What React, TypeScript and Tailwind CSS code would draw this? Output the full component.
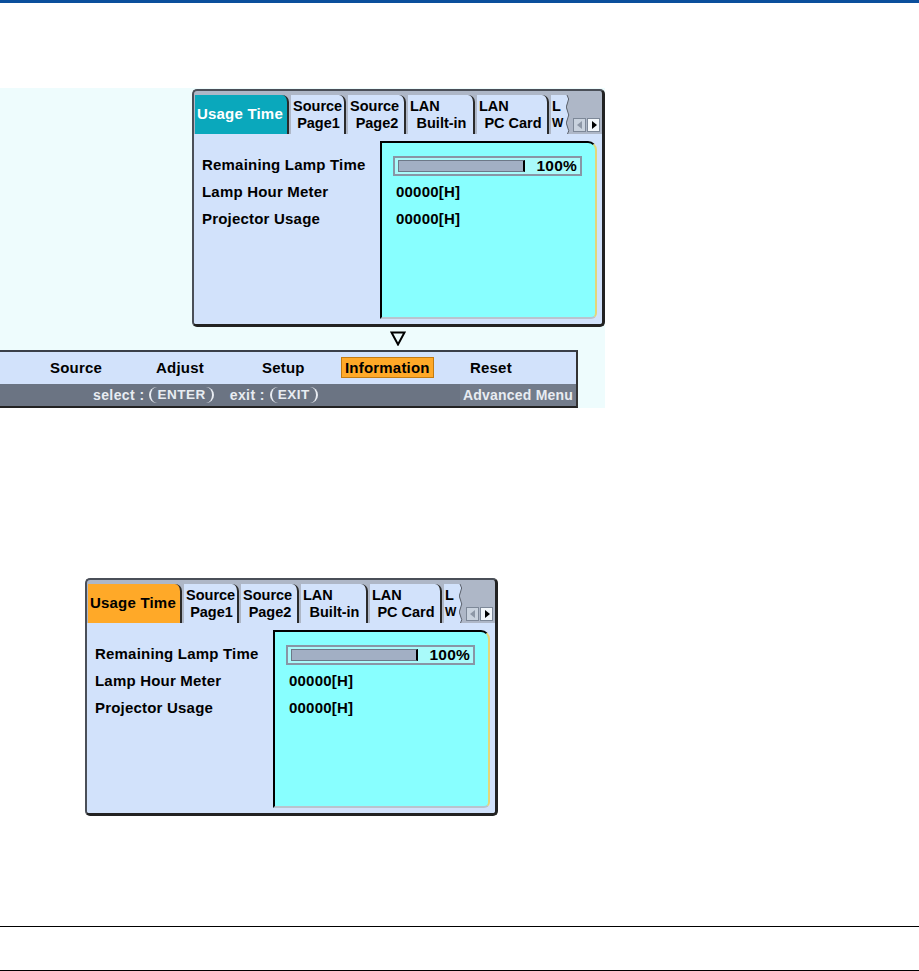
import React from "react";

const font = { fontFamily: '"Liberation Sans", Arial, sans-serif' };

function Tab({ top, bottom, w }: { top: string; bottom?: string; w: string }) {
  return (
    <div
      className={`${w} h-[39px] mr-[2px] bg-[#d2e2fb] border-r-2 border-[#2a2a2a] rounded-tr-[7px] flex flex-col justify-center leading-[17px] text-[14.5px] font-bold text-black pl-[2px]`}
    >
      <span>{top}</span>
      {bottom && <span className="text-center">{bottom}</span>}
    </div>
  );
}

function Arrow({ dir }: { dir: "l" | "r" }) {
  return (
    <div
      className={`w-[13px] h-[14px] flex items-center justify-center border border-[#7d8898] ${
        dir === "l" ? "bg-[#c9d2de]" : "bg-[#f2f6fa]"
      }`}
    >
      <svg width="8" height="10" viewBox="0 0 8 10">
        {dir === "l" ? (
          <polygon points="6,1 1,5 6,9" fill="#8d97a6" />
        ) : (
          <polygon points="2,1 7,5 2,9" fill="#000" />
        )}
      </svg>
    </div>
  );
}

function Panel({ active }: { active: "teal" | "orange" }) {
  const tabCls =
    active === "teal" ? "bg-[#0aa8bc] text-white" : "bg-[#ffa928] text-black";
  return (
    <div className="w-[413px] h-[238px] rounded-[5px] border-2 border-[#4a4f58] border-r-[3px] border-b-[3px] border-r-[#222] border-b-[#222] bg-[#aeb7c7] flex flex-col overflow-hidden">
      {/* tab strip */}
      <div className="flex items-end h-[43px] pl-[1px] pt-[3px]">
        <div
          className={`w-[94px] h-[39px] mr-[2px] ${tabCls} border-r-2 border-[#2a2a2a] rounded-tr-[7px] flex items-center pl-[2px] text-[15px] font-bold tracking-[0.2px]`}
        >
          Usage Time
        </div>
        <Tab top="Source" bottom="Page1" w="w-[55px]" />
        <Tab top="Source" bottom="Page2" w="w-[58px]" />
        <Tab top="LAN" bottom="Built-in" w="w-[67px]" />
        <Tab top="LAN" bottom="PC Card" w="w-[72px]" />
        <div className="flex h-[39px]">
          <div className="w-[15px] h-full bg-[#d2e2fb] flex flex-col justify-center leading-[17px] text-[14.5px] font-bold pl-[1px]">
            <span>L</span>
            <span className="text-[12px]">W</span>
          </div>
          <svg width="5" height="39" viewBox="0 0 5 39">
            <path
              d="M0 0 L1 0 Q4 4 1.5 8 Q-1 12 1.5 16 Q4 20 1.5 24 Q-1 28 1.5 32 Q4 36 1.5 39 L0 39 Z"
              fill="#d2e2fb"
            />
            <path
              d="M1 0 Q4 4 1.5 8 Q-1 12 1.5 16 Q4 20 1.5 24 Q-1 28 1.5 32 Q4 36 1.5 39"
              stroke="#5a606a"
              strokeWidth="1"
              fill="none"
            />
          </svg>
        </div>
        <div className="flex items-center h-[39px] pt-[20px] pl-[2px] gap-[1px]">
          <Arrow dir="l" />
          <Arrow dir="r" />
        </div>
      </div>
      {/* body */}
      <div className="flex flex-1 bg-[#d2e2fb] pl-[8px] pt-[7px] pr-[5px] pb-[5px]">
        <div className="w-[178px] pt-[11px] text-[15px] font-bold text-black tracking-[0.2px]">
          <div className="h-[27px] flex items-center">Remaining Lamp Time</div>
          <div className="h-[27px] flex items-center">Lamp Hour Meter</div>
          <div className="h-[27px] flex items-center">Projector Usage</div>
        </div>
        <div className="flex-1 bg-[#88ffff] border-l-2 border-t-2 border-black border-r-2 border-r-[#e3d77a] border-b-2 border-b-[#b9c4cf] rounded-tr-[9px] rounded-br-[6px] pt-[9px] pl-[11px] text-[15px] font-bold text-black tracking-[0.2px]">
          <div className="h-[27px] flex items-center">
            <div className="w-[189px] h-[20px] border-2 border-[#8896a6] bg-[#a9fafa] flex items-center pl-[3px] pr-[3px]">
              <div className="w-[127px] h-[12px] bg-[#a2afc4] border border-[#6d7888] border-r-2 border-r-black" />
              <span className="ml-auto text-[15.5px]">100%</span>
            </div>
          </div>
          <div className="h-[27px] flex items-center pl-[3px]">00000[H]</div>
          <div className="h-[27px] flex items-center pl-[3px]">00000[H]</div>
        </div>
      </div>
    </div>
  );
}

function Pill({ children }: { children: React.ReactNode }) {
  return (
    <span className="inline-flex items-center h-[16px] px-[6px] rounded-[8px] border-x-2 border-[#e8ecf2] text-[13.5px] leading-none tracking-[0.5px]">
      {children}
    </span>
  );
}

function MenuBar() {
  return (
    <div className="w-[578px] border-t-2 border-[#3a3f48] border-r-2 border-r-[#333] border-b-2 border-b-[#222]">
      <div className="h-[32px] bg-[#d2e2fb] flex items-center text-[15px] font-bold text-black tracking-[0.2px]">
        <span className="w-[50px]" />
        <span className="w-[106px]">Source</span>
        <span className="w-[106px]">Adjust</span>
        <span className="w-[79px]">Setup</span>
        <span className="w-[129px]">
          <span className="bg-[#ffa928] border border-[#c47b10] px-[3px] py-[1px]">Information</span>
        </span>
        <span>Reset</span>
      </div>
      <div className="h-[22px] bg-[#6b7483] flex items-center text-[14px] font-bold text-[#e8ecf2] tracking-[0.4px]">
        <span className="w-[93px]" />
        <span className="mr-[5px]">select :</span>
        <Pill>ENTER</Pill>
        <span className="ml-[16px] mr-[5px]">exit :</span>
        <Pill>EXIT</Pill>
        <span className="ml-auto h-full flex items-center bg-[#737c8b] px-[3px] tracking-[0.2px]">Advanced Menu</span>
      </div>
    </div>
  );
}

export default function App() {
  return (
    <div className="w-[919px] h-[971px] bg-white flex flex-col" style={font}>
      <div className="h-[3px] bg-[#0b4f9c]" />
      <div className="h-[85px]" />
      <div className="w-[605px] h-[320px] bg-[#eefcfd] pt-[1px]">
        <div className="ml-[192px]">
          <Panel active="teal" />
        </div>
        <div className="h-[23px] flex items-center pl-[390px]">
          <svg width="16" height="15" viewBox="0 0 16 15">
            <polygon points="1.5,1.5 14.5,1.5 8,13.5" fill="none" stroke="#000" strokeWidth="2" />
          </svg>
        </div>
        <MenuBar />
      </div>
      <div className="h-[170px]" />
      <div className="ml-[85px]">
        <Panel active="orange" />
      </div>
      <div className="h-[110px]" />
      <div className="h-[1px] bg-black" />
      <div className="h-[43px]" />
      <div className="h-[1px] bg-black" />
    </div>
  );
}
